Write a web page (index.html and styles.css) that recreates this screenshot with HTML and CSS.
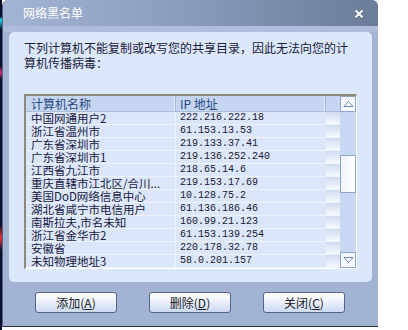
FILE: index.html
```html
<!DOCTYPE html>
<html lang="zh">
<head>
<meta charset="utf-8">
<link rel="stylesheet" href="styles.css">
</head>
<body>
<div class="screen">
  <div class="desk"></div>
  <div class="window">
    <div class="titlebar">
      <span class="title">网络黑名单</span>
      <svg class="close" width="10" height="10" viewBox="0 0 10 10">
        <path d="M1.5 2.5 L8.5 9.5 M8.5 2.5 L1.5 9.5" stroke="#4a5a76" stroke-width="2.2" fill="none"/>
        <path d="M1.5 1.5 L8.5 8.5 M8.5 1.5 L1.5 8.5" stroke="#ffffff" stroke-width="2" fill="none"/>
      </svg>
    </div>
    <div class="gap-strip"></div>
    <div class="panel">
      <p class="msg">下列计算机不能复制或改写您的共享目录，因此无法向您的计算机传播病毒：</p>
      <div class="listbox">
        <div class="list">
          <div class="row head">
            <div class="c1">计算机名称</div><div class="c2">IP 地址</div><div class="c3"></div>
          </div>
          <div class="row"><div class="c1">中国网通用户2</div><div class="c2 ip">222.216.222.18</div><div class="c3"></div></div>
          <div class="row"><div class="c1">浙江省温州市</div><div class="c2 ip">61.153.13.53</div><div class="c3"></div></div>
          <div class="row"><div class="c1">广东省深圳市</div><div class="c2 ip">219.133.37.41</div><div class="c3"></div></div>
          <div class="row"><div class="c1">广东省深圳市1</div><div class="c2 ip">219.136.252.240</div><div class="c3"></div></div>
          <div class="row"><div class="c1">江西省九江市</div><div class="c2 ip">218.65.14.6</div><div class="c3"></div></div>
          <div class="row"><div class="c1">重庆直辖市江北区/合川...</div><div class="c2 ip">219.153.17.69</div><div class="c3"></div></div>
          <div class="row"><div class="c1">美国DoD网络信息中心</div><div class="c2 ip">10.128.75.2</div><div class="c3"></div></div>
          <div class="row"><div class="c1">湖北省咸宁市电信用户</div><div class="c2 ip">61.136.186.46</div><div class="c3"></div></div>
          <div class="row"><div class="c1">南斯拉夫,市名未知</div><div class="c2 ip">160.99.21.123</div><div class="c3"></div></div>
          <div class="row"><div class="c1">浙江省金华市2</div><div class="c2 ip">61.153.139.254</div><div class="c3"></div></div>
          <div class="row"><div class="c1">安徽省</div><div class="c2 ip">220.178.32.78</div><div class="c3"></div></div>
          <div class="row"><div class="c1">未知物理地址3</div><div class="c2 ip">58.0.201.157</div><div class="c3"></div></div>
        </div>
        <div class="scrollbar">
          <div class="sbtn">
            <svg width="11" height="8" viewBox="0 0 11 8"><path d="M1 6.5 L5.5 1.5 L10 6.5 Z" fill="#ffffff" stroke="#6d88b4" stroke-width="1"/></svg>
          </div>
          <div class="track"><div class="thumb"></div></div>
          <div class="sbtn">
            <svg width="11" height="8" viewBox="0 0 11 8"><path d="M1 1.5 L5.5 6.5 L10 1.5 Z" fill="#ffffff" stroke="#6d88b4" stroke-width="1"/></svg>
          </div>
        </div>
      </div>
    </div>
    <div class="buttons">
      <div class="btn">添加(<u>A</u>)</div>
      <div class="btn">删除(<u>D</u>)</div>
      <div class="btn">关闭(<u>C</u>)</div>
    </div>
  </div>
</div>
</body>
</html>
```
FILE: styles.css
```css
html, body {
  margin: 0;
  padding: 0;
  background: #ffffff;
}
body {
  width: 408px;
  height: 330px;
  overflow: hidden;
  font-family: "Noto Sans CJK SC", "DejaVu Sans", sans-serif;
  font-size: 12px;
}
.screen {
  display: flex;
  align-items: flex-start;
}
.desk {
  width: 2px;
  height: 330px;
  background: linear-gradient(180deg, #0a1030 0%, #0a1030 5%, #18e0f0 6%, #0a1030 9%, #0a1030 20%, #d03070 22%, #0a1030 24%, #0a1030 68%, #e03030 72%, #0a1030 76%, #0a1030 100%);
}
.window {
  width: 376px;
  height: 327px;
  background: #a3b3d3;
  border-radius: 6px 6px 0 0;
  border-left: 1px solid #55627e;
  border-bottom: 1px solid #2a3040;
  box-sizing: border-box;
  display: flex;
  flex-direction: column;
  overflow: hidden;
}
.titlebar {
  height: 26px;
  flex: none;
  background: linear-gradient(90deg, #a4b4d4 0%, #8d9ebd 45%, #6b7c98 100%);
  display: flex;
  align-items: center;
  justify-content: space-between;
  padding: 0 14px 0 20px;
  color: #ffffff;
}
.title {
  font-size: 12px;
  line-height: 14px;
}
.close {
  display: block;
  margin-top: 1px;
}
.gap-strip {
  height: 6px;
  flex: none;
  background: #adbddb;
}
.panel {
  height: 250px;
  margin: 0 6px 0 6px;
  flex: none;
  background: #dbe7fb;
  border-radius: 5px;
  padding: 8px 0 0 15px;
  box-sizing: border-box;
}
.msg {
  margin: 0;
  width: 330px;
  line-height: 15px;
  color: #1a2038;
  font-size: 12px;
}
.listbox {
  margin-top: 24px;
  width: 333px;
  height: 175px;
  box-sizing: border-box;
  border-top: 2px solid #8c8a78;
  border-left: 2px solid #8c8a78;
  border-right: 1px solid #ffffff;
  border-bottom: 1px solid #ffffff;
  display: flex;
  background: #dbe6fa;
}
.list {
  width: 314px;
  display: flex;
  flex-direction: column;
}
.row {
  display: flex;
  height: 13px;
  line-height: 12px;
  color: #1a2040;
  box-sizing: border-box;
  border-bottom: 1px solid #edf3fd;
}
.row .c1 {
  width: 150px;
  padding-left: 5px;
  box-sizing: border-box;
  white-space: nowrap;
  border-right: 1px solid #edf3fd;
  font-size: 11.5px;
}
.row .c2 {
  width: 150px;
  padding-left: 4px;
  box-sizing: border-box;
  white-space: nowrap;
}
.row .c3 {
  width: 14px;
  background: linear-gradient(180deg, #cfdbef 0%, #f6f9fe 100%);
}
.ip {
  font-family: "Liberation Mono", "DejaVu Sans Mono", monospace;
  font-size: 10px;
  color: #1a2030;
}
.row.head {
  height: 16px;
  line-height: 15px;
  background: #c6d6f0;
  color: #2a4a80;
  border-bottom: 1px solid #a9bcdc;
}
.row.head .c1 {
  font-size: 12px;
}
.row.head .c1,
.row.head .c2 {
  border-right: 1px solid #9fb3d6;
  box-shadow: inset -1px 0 0 #e8f0fc;
}
.row.head .c3 {
  background: #c6d6f0;
}
.scrollbar {
  width: 16px;
  display: flex;
  flex-direction: column;
}
.sbtn {
  height: 16px;
  box-sizing: border-box;
  border: 1px solid #8ea4c8;
  background: #f4f8fe;
  display: flex;
  align-items: center;
  justify-content: center;
}
.track {
  flex: 1;
  background: #c8d8f2;
  padding-top: 43px;
}
.thumb {
  height: 38px;
  box-sizing: border-box;
  border: 1px solid #8ea4c8;
  background: linear-gradient(90deg, #eef4fe, #ffffff);
}
.buttons {
  display: flex;
  gap: 32px;
  padding: 10px 0 0 32px;
}
.btn {
  width: 82px;
  height: 21px;
  box-sizing: border-box;
  border: 1px solid #56668a;
  border-radius: 3px;
  background: linear-gradient(180deg, #ffffff 0%, #eef3fc 40%, #cbd9f2 100%);
  text-align: center;
  line-height: 19px;
  color: #1a1a24;
  font-size: 12px;
}
.btn u {
  text-underline-offset: 1px;
}
```
